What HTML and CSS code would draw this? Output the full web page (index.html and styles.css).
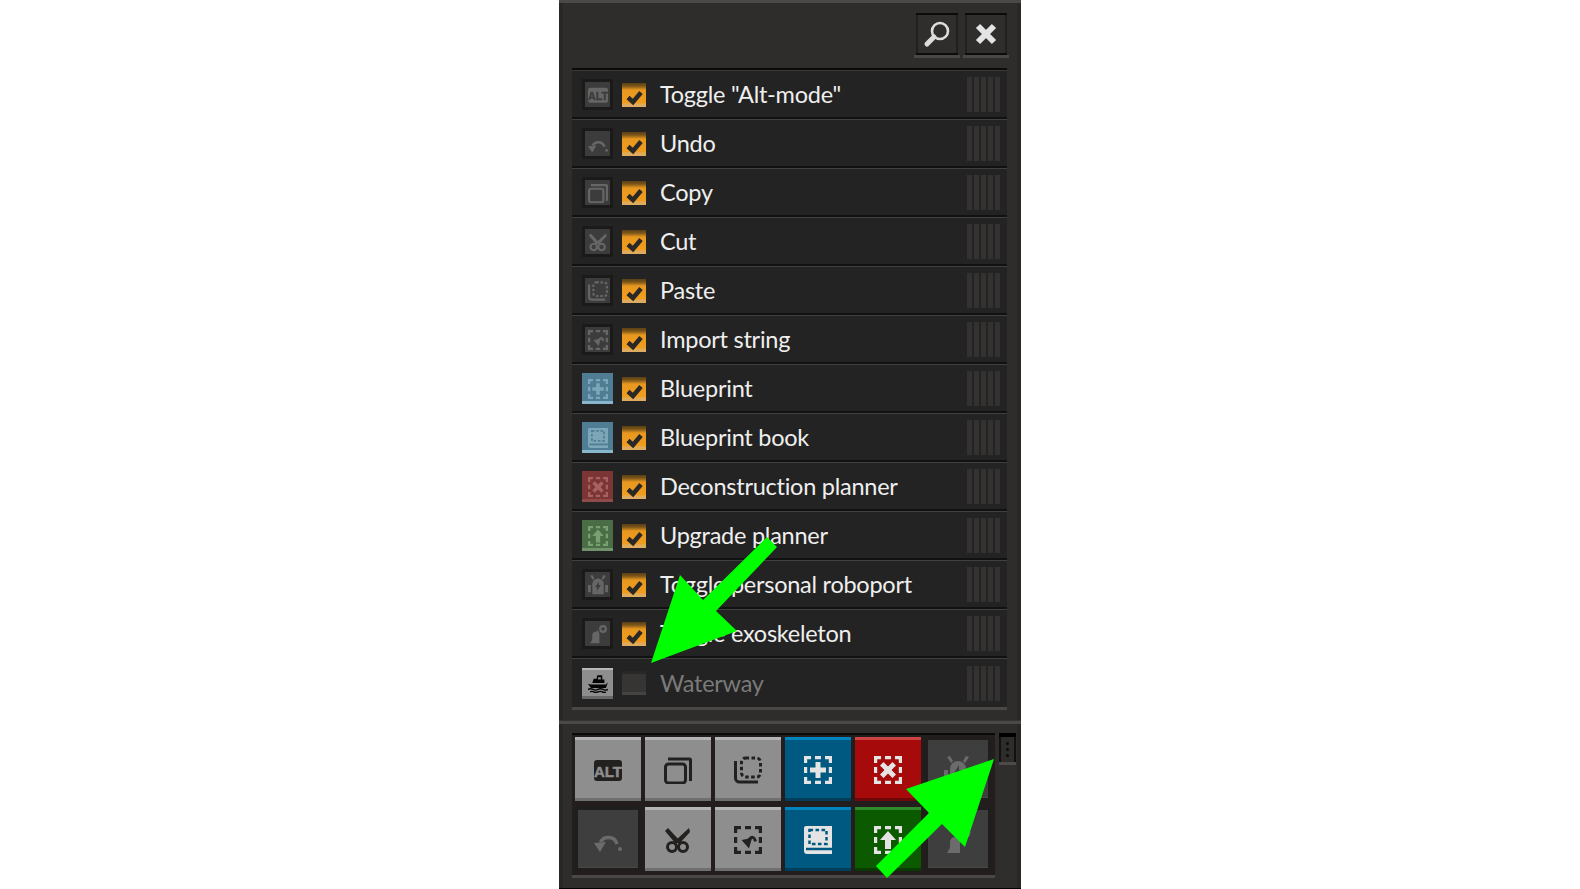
FILE: index.html
```html
<!DOCTYPE html>
<html lang="en">
<head>
<meta charset="utf-8">
<title>Shortcuts</title>
<link rel="stylesheet" href="styles.css">
</head>
<body>
<svg class="defs" aria-hidden="true">
  <symbol id="tick" viewBox="0 0 24 24"><path d="M6 14.500L11 19L19 9.500"/></symbol>
  <symbol id="copy" viewBox="0 0 28 28"><rect class="st" x="1.500" y="8" width="20" height="19" rx="3"/><path class="st" d="M4 3H25.500a1 1 0 0 1 1 1V25"/></symbol>
  <symbol id="paste" viewBox="0 0 28 28"><rect class="st dash" x="7.500" y="2" width="19" height="19" rx="4"/><path class="st" d="M1.500 5V22a4 4 0 0 0 4 4H24"/></symbol>
  <symbol id="undo" viewBox="0 0 28 28"><path class="st wide" d="M23 18A9 9 0 0 0 6.500 16"/><path class="fl" d="M0 17L12 16L6 26Z"/><circle class="fl" cx="26" cy="23" r="2"/></symbol>
  <symbol id="cut" viewBox="0 0 28 28"><circle class="st" cx="8" cy="21" r="4.500"/><circle class="st" cx="19" cy="21" r="4.500"/><path class="fl" d="M1 5L4 2L16 15L12 18Z"/><path class="fl" d="M25 2L26 6L15 18L11 15Z"/></symbol>
  <symbol id="sel" viewBox="0 0 28 28"><path class="st sel" d="M1.500 7V1.500H7M11 1.500H17M21 1.500H26.500V7M26.500 11V17M26.500 21V26.500H21M17 26.500H11M7 26.500H1.500V21M1.500 17V11"/></symbol>
  <symbol id="import" viewBox="0 0 28 28"><use href="#sel"/><path class="fl" d="M7.500 14L18 12L15 22.500Z"/><path class="st" d="M14 15Q19.500 7.500 21.500 15.500"/></symbol>
  <symbol id="blueprint" viewBox="0 0 28 28"><use href="#sel"/><path class="fl" d="M11.500 6H16.500V11.500H22V16.500H16.500V22H11.500V16.500H6V11.500H11.500Z"/></symbol>
  <symbol id="decon" viewBox="0 0 28 28"><use href="#sel"/><path class="fl" d="M9.500 6L14 10.500L18.500 6L22 9.500L17.500 14L22 18.500L18.500 22L14 17.500L9.500 22L6 18.500L10.500 14L6 9.500Z"/></symbol>
  <symbol id="upgrade" viewBox="0 0 28 28"><use href="#sel"/><path class="fl" d="M14 5L22 14H17V23H11V14H6Z"/></symbol>
  <symbol id="book" viewBox="0 0 28 28"><path class="fl" d="M2 0H28V28H3a3 3 0 0 1 -3 -3V2a2 2 0 0 1 2 -2Z"/><rect class="cut dash" x="5.500" y="4" width="17" height="14"/><path class="cut" d="M2 23H28"/></symbol>
  <symbol id="robo" viewBox="0 0 28 28"><path class="fl" d="M6 27V13a8 8 0 0 1 16 0V27Z"/><path class="fl" d="M0 14H4V24H0ZM24 14H28V24H24ZM3 1L6 0L9 5L7 7ZM25 1L22 0L19 5L21 7Z"/><path class="cut-fl" d="M15 9L10 17H13L12 23L18 14H15Z"/></symbol>
  <symbol id="exo" viewBox="0 0 28 28"><circle class="st" cx="21" cy="7" r="4"/><path class="fl" d="M3 27L6 22V16a5 5 0 0 1 5 -5L14 9L16 13V27Z"/></symbol>
  <symbol id="boat" viewBox="0 0 28 28"><path class="fl" d="M0 15L4 16H25L28 13L25 21H4Z"/><path class="fl" d="M6 14L8 8H12L13 3H20V9H23V14Z"/><path class="cut-fl" d="M14 6H18V9H14Z"/><path class="st thin" d="M0 23Q3.500 21 7 23T14 23T21 23T28 23M3 26.500Q5.500 25 8 26.500T14 26.500T20 26.500T25 26.500"/></symbol>
</svg>

<main class="panel">
  <section class="upper">
    <header class="head">
      <button class="tool" aria-label="Search"><svg class="tool-icon" viewBox="0 0 28 28"><circle class="lens" cx="17" cy="11" r="8"/><path class="handle" d="M11 17L4 24"/></svg></button>
      <button class="tool" aria-label="Close"><svg class="tool-icon" viewBox="0 0 28 28"><path class="cross" d="M6 6L22 22M22 6L6 22"/></svg></button>
    </header>
    <ul class="list">
      <li class="row"><span class="thumb t-dim"><svg class="alt" viewBox="0 0 28 28"><rect class="fl" y="4" width="28" height="21" rx="3"/><text class="alt-text" x="14" y="20.500">ALT</text></svg></span><span class="check on"><svg viewBox="0 0 24 24"><use href="#tick"/></svg></span><span class="label">Toggle "Alt-mode"</span><span class="grip"></span></li>
      <li class="row"><span class="thumb t-dim"><svg viewBox="0 0 28 28"><use href="#undo"/></svg></span><span class="check on"><svg viewBox="0 0 24 24"><use href="#tick"/></svg></span><span class="label">Undo</span><span class="grip"></span></li>
      <li class="row"><span class="thumb t-dim"><svg viewBox="0 0 28 28"><use href="#copy"/></svg></span><span class="check on"><svg viewBox="0 0 24 24"><use href="#tick"/></svg></span><span class="label">Copy</span><span class="grip"></span></li>
      <li class="row"><span class="thumb t-dim"><svg viewBox="0 0 28 28"><use href="#cut"/></svg></span><span class="check on"><svg viewBox="0 0 24 24"><use href="#tick"/></svg></span><span class="label">Cut</span><span class="grip"></span></li>
      <li class="row"><span class="thumb t-dim"><svg viewBox="0 0 28 28"><use href="#paste"/></svg></span><span class="check on"><svg viewBox="0 0 24 24"><use href="#tick"/></svg></span><span class="label">Paste</span><span class="grip"></span></li>
      <li class="row"><span class="thumb t-dim"><svg viewBox="0 0 28 28"><use href="#import"/></svg></span><span class="check on"><svg viewBox="0 0 24 24"><use href="#tick"/></svg></span><span class="label">Import string</span><span class="grip"></span></li>
      <li class="row"><span class="thumb t-blue"><svg viewBox="0 0 28 28"><use href="#blueprint"/></svg></span><span class="check on"><svg viewBox="0 0 24 24"><use href="#tick"/></svg></span><span class="label">Blueprint</span><span class="grip"></span></li>
      <li class="row"><span class="thumb t-blue"><svg viewBox="0 0 28 28"><use href="#book"/></svg></span><span class="check on"><svg viewBox="0 0 24 24"><use href="#tick"/></svg></span><span class="label">Blueprint book</span><span class="grip"></span></li>
      <li class="row"><span class="thumb t-red"><svg viewBox="0 0 28 28"><use href="#decon"/></svg></span><span class="check on"><svg viewBox="0 0 24 24"><use href="#tick"/></svg></span><span class="label">Deconstruction planner</span><span class="grip"></span></li>
      <li class="row"><span class="thumb t-green"><svg viewBox="0 0 28 28"><use href="#upgrade"/></svg></span><span class="check on"><svg viewBox="0 0 24 24"><use href="#tick"/></svg></span><span class="label">Upgrade planner</span><span class="grip"></span></li>
      <li class="row"><span class="thumb t-dim"><svg viewBox="0 0 28 28"><use href="#robo"/></svg></span><span class="check on"><svg viewBox="0 0 24 24"><use href="#tick"/></svg></span><span class="label">Toggle personal roboport</span><span class="grip"></span></li>
      <li class="row"><span class="thumb t-dim"><svg viewBox="0 0 28 28"><use href="#exo"/></svg></span><span class="check on"><svg viewBox="0 0 24 24"><use href="#tick"/></svg></span><span class="label">Toggle exoskeleton</span><span class="grip"></span></li>
      <li class="row"><span class="thumb t-bright"><svg viewBox="0 0 28 28"><use href="#boat"/></svg></span><span class="check"></span><span class="label off">Waterway</span><span class="grip"></span></li>
    </ul>
  </section>

  <section class="lower">
    <div class="frame">
      <div class="bar">
        <span class="btn b-gray"><svg class="alt" viewBox="0 0 28 28"><rect class="fl" y="4" width="28" height="21" rx="3"/><text class="alt-text" x="14" y="20.500">ALT</text></svg></span>
        <span class="btn b-gray"><svg viewBox="0 0 28 28"><use href="#copy"/></svg></span>
        <span class="btn b-gray"><svg viewBox="0 0 28 28"><use href="#paste"/></svg></span>
        <span class="btn b-blue"><svg viewBox="0 0 28 28"><use href="#blueprint"/></svg></span>
        <span class="btn b-red"><svg viewBox="0 0 28 28"><use href="#decon"/></svg></span>
        <span class="btn b-dim"><svg viewBox="0 0 28 28"><use href="#robo"/></svg></span>
        <span class="btn b-dim"><svg viewBox="0 0 28 28"><use href="#undo"/></svg></span>
        <span class="btn b-gray"><svg viewBox="0 0 28 28"><use href="#cut"/></svg></span>
        <span class="btn b-gray"><svg viewBox="0 0 28 28"><use href="#import"/></svg></span>
        <span class="btn b-blue"><svg viewBox="0 0 28 28"><use href="#book"/></svg></span>
        <span class="btn b-green"><svg viewBox="0 0 28 28"><use href="#upgrade"/></svg></span>
        <span class="btn b-dim"><svg viewBox="0 0 28 28"><use href="#exo"/></svg></span>
      </div>
    </div>
    <div class="scroll"><div class="scroll-thumb"><i></i><i></i><i></i></div></div>
  </section>
</main>

<svg class="arrows" viewBox="0 0 1580 889" aria-hidden="true">
  <polygon points="767,537 777,547 716,611 737,631 651,663 680,575 703,600"/>
  <polygon points="994,759 965,847 942,824 887,878 876,866 929,813 906,789"/>
</svg>
</body>
</html>
```

FILE: styles.css
```css
* { box-sizing: border-box; }
html, body { margin: 0; height: 100%; background: #fff; }
body { position: relative; display: flex; justify-content: center; align-items: flex-start; overflow: hidden; font-family: Lato, "Liberation Sans", sans-serif; }

.defs { position: absolute; width: 0; height: 0; }
.st { fill: none; stroke: currentColor; stroke-width: 3; }
.st.sel { stroke-width: 3.4; }
.st.wide { stroke-width: 3.5; }
.st.thin { stroke-width: 2; }
.fl { fill: currentColor; }
.dash { stroke-dasharray: 3.6 2.4; }
.cut { fill: none; stroke: var(--tone); stroke-width: 2.5; }
.cut-fl { fill: var(--tone); }
.alt-text { font: 900 15px "Liberation Sans", sans-serif; text-anchor: middle; fill: var(--tone); stroke: var(--tone); stroke-width: 0.5; }

.panel {
  width: 462px; height: 889px; display: flex; flex-direction: column;
  background: #000;
}

.upper {
  height: 720px; padding: 3px 14px 11px 13px;
  background: #2e2d2c;
  box-shadow: inset 0 3px 0 #4a4948, inset 4px 0 0 #282726, inset -4px 0 0 #282726;
  display: flex; flex-direction: column;
}
.head { height: 65px; padding-top: 10px; display: flex; justify-content: flex-end; gap: 7px; flex: none; }
.tool {
  position: relative;
  width: 42px; height: 42px; padding: 0; border: 0; background: #302e2d;
  border-top: 2px solid #0c0b0b; border-bottom: 2px solid #0d0c0c;
  box-shadow: inset 2px 0 0 #221f1e, inset -2px 0 0 #221f1e;
  display: flex; align-items: center; justify-content: center;
}
.tool::after { content: ""; position: absolute; left: -2px; right: -2px; bottom: -5px; height: 3px; background: #4a4644; }
.tool-icon { width: 28px; height: 28px; display: block; }
.lens { fill: none; stroke: #dcdcdc; stroke-width: 2.6; }
.handle { fill: none; stroke: #dcdcdc; stroke-width: 5; stroke-linecap: round; }
.cross { fill: none; stroke: #e4e4e4; stroke-width: 6; }

.list { list-style: none; margin: 0; padding: 0; border-top: 2px solid #0b0a0a; border-bottom: 3px solid #4a4847; }
.row {
  height: 49px; display: flex; align-items: center; padding: 1px 5px 0 10px;
  background: #242323;
  border-top: 1px solid #42403f; border-bottom: 2px solid #121111;
}
.row:first-child { border-top-color: #3a3938; }
.row:last-child { border-bottom: 0; padding-top: 0; }

.thumb {
  --tone: #3c3c3c;
  width: 31px; height: 31px; flex: none; display: flex; align-items: center; justify-content: center;
  background: var(--tone); color: #666;
}
.thumb svg { width: 20px; height: 20px; display: block; }
.t-dim { box-shadow: inset 0 0 0 3px #1b1a19, inset 0 -2px 0 #4a4a4a; }
.t-blue { --tone: #4f7d93; color: #7ea6b9; box-shadow: inset 0 -3px 0 #88b6cc; }
.t-red { --tone: #7b3535; color: #a76161; box-shadow: inset 0 -3px 0 #8f4a4a; }
.t-green { --tone: #4a6d45; color: #78a071; box-shadow: inset 0 -3px 0 #72946c; }
.t-bright { --tone: #8e8e8e; color: #050505; box-shadow: inset 0 2px 0 #b8b8b8, inset 0 -3px 0 #686868; }

.check {
  width: 24px; height: 24px; flex: none; margin-left: 9px;
  background: #363534;
  box-shadow: inset 0 3px 0 #292827, inset 0 -3px 0 #454443;
}
.check.on {
  background: linear-gradient(#5b3f15 0, #7a5518 3px, #e8981f 7px, #f09d1f 20px, #dfab5f 21px, #dfab5f 24px);
  box-shadow: none;
}
.check svg { display: block; width: 24px; height: 24px; fill: none; stroke: #2a2826; stroke-width: 4.5; }

.label { margin: 1px 0 0 14px; font-size: 23.5px; letter-spacing: -0.25px; line-height: 1; color: #efefef; flex: 1; white-space: nowrap; }
.label.off { color: #7a7a7a; }
.grip {
  width: 35px; height: 35px; flex: none;
  background: repeating-linear-gradient(90deg, #333231 0 5px, #242323 5px 7px);
}

.lower {
  flex: 1; position: relative; display: flex; gap: 3px; padding: 13px 6px 12px 13px;
  background: #2e2d2c;
  box-shadow: inset 0 1px 0 #353433, inset 0 4px 0 #4a4948, inset 4px 0 0 #282726, inset -4px 0 0 #282726;
}
.lower::after { content: ""; position: absolute; left: 0; right: 0; bottom: 0; height: 2px; background: #000; }
.frame { width: 423px; height: 145px; padding: 2px 3px 5px 3px; background: #231e1d; border-top: 2px solid #0b0a0a; border-bottom: 3px solid #4a4847; flex: none; }
.bar { display: grid; grid-template-columns: repeat(6, 66px); grid-auto-rows: 64px; gap: 6px 4px; }
.btn {
  --tone: #8e8e8e;
  display: flex; align-items: center; justify-content: center; padding-top: 2px;
  background: var(--tone);
}
.btn svg { width: 28px; height: 28px; display: block; }
.b-gray { color: #222120; box-shadow: inset 0 3px 0 #b4b4b4, inset 0 -3px 0 #6f6f6f; }
.b-blue { --tone: #005980; color: #e4e4e4; box-shadow: inset 0 3px 0 #0084bd, inset 0 -3px 0 #003e5a; }
.b-red { --tone: #a60a0a; color: #e4e4e4; box-shadow: inset 0 3px 0 #cd4343, inset 0 -3px 0 #6e0808; }
.b-green { --tone: #0c5a00; color: #e4e4e4; box-shadow: inset 0 3px 0 #2f8a2b, inset 0 -3px 0 #083c00; }
.b-dim { --tone: #3e3e3e; color: #6b6b6b; box-shadow: inset 0 0 0 3px #1f1e1d, inset 0 -4px 0 #4a4847; }

.scroll { width: 17px; height: 145px; flex: none; background: #2f2e2d; margin-left: 1px; }
.scroll-thumb {
  height: 32px; background: #2f2d2c;
  border-top: 4px solid #000; border-bottom: 3px solid #4d4b4a;
  display: flex; flex-direction: column; align-items: center; justify-content: center; gap: 3px;
  box-shadow: inset 2px 0 0 #111, inset -2px 0 0 #111;
}
.scroll-thumb i { width: 3px; height: 3px; border-radius: 50%; background: #0c0c0c; display: block; }

.arrows { position: absolute; left: 0; top: 0; width: 1580px; height: 889px; pointer-events: none; }
.arrows polygon { fill: #00ff00; }
```
